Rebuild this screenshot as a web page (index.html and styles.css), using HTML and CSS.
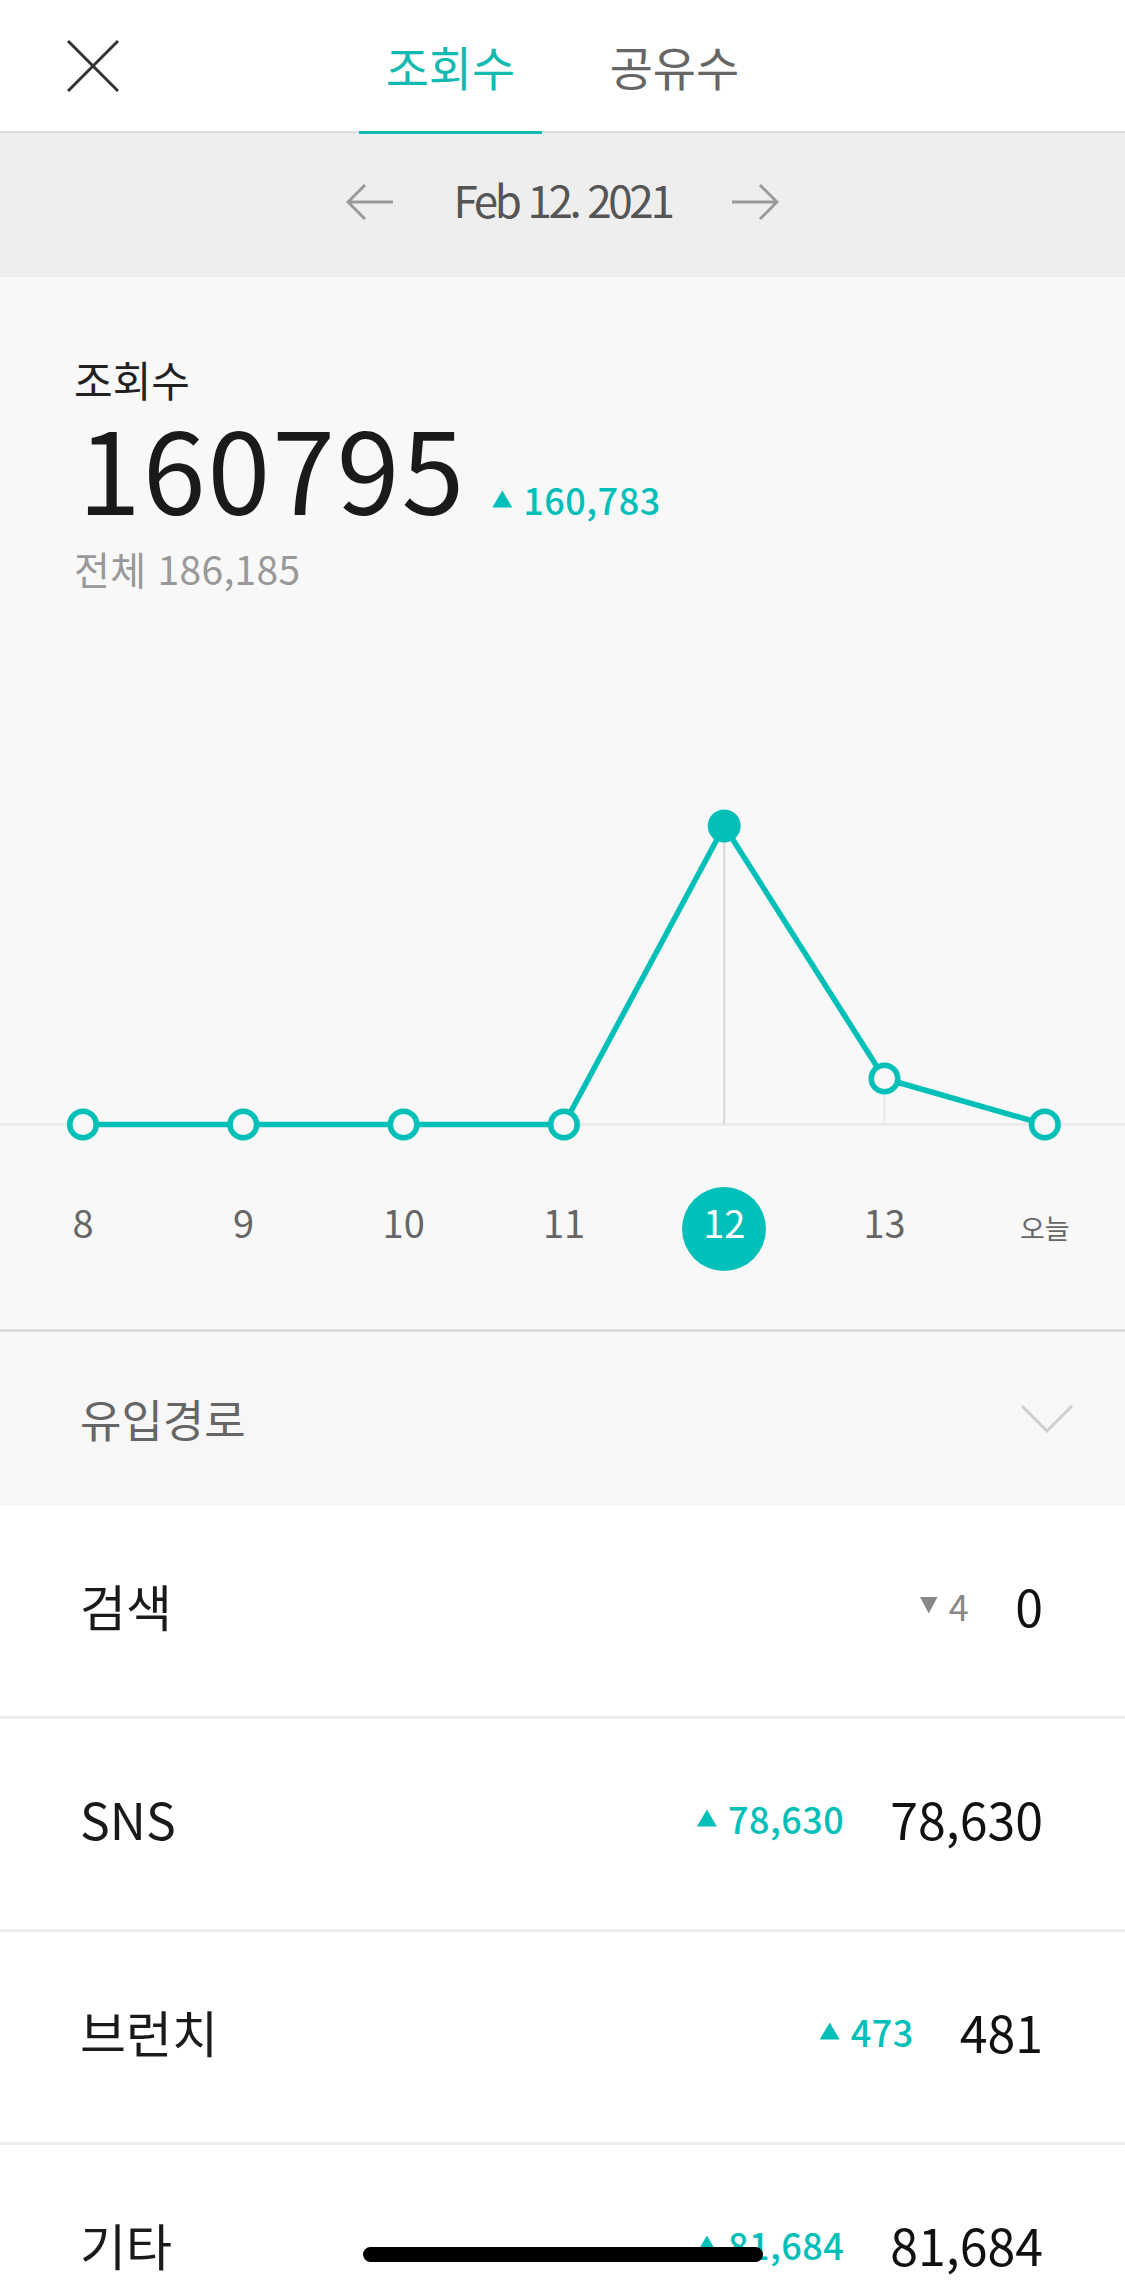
FILE: index.html
```html
<!DOCTYPE html>
<html lang="ko">
<head>
<meta charset="utf-8">
<title>통계</title>
<link rel="stylesheet" href="styles.css">
</head>
<body>
<div class="screen">
  <header class="topbar">
    <a href="javascript:;" class="close">
      <svg width="52" height="52" viewBox="0 0 52 52"><path d="M1 1L51 51M51 1L1 51" stroke="#333" stroke-width="3" fill="none"/></svg>
    </a>
    <nav class="tabs">
      <a href="javascript:;" class="tab on">조회수</a>
      <a href="javascript:;" class="tab">공유수</a>
    </nav>
    <span></span>
  </header>

  <div class="datebar">
    <a href="javascript:;" class="arrow">
      <svg width="48" height="38" viewBox="0 0 48 38"><path d="M47 19H2M19 2L2 19L19 36" stroke="#999" stroke-width="3" fill="none"/></svg>
    </a>
    <span class="date">Feb 12. 2021</span>
    <a href="javascript:;" class="arrow">
      <svg width="48" height="38" viewBox="0 0 48 38"><path d="M1 19H46M29 2L46 19L29 36" stroke="#999" stroke-width="3" fill="none"/></svg>
    </a>
  </div>

  <section class="summary">
    <div class="head">
      <div class="label">조회수</div>
      <div class="total">
        <span class="big">160795</span>
        <span class="delta up">160,783</span>
      </div>
      <div class="all">전체 186,185</div>
    </div>

    <svg class="chart" width="1125" height="560" viewBox="0 0 1125 560">
      <line x1="0" y1="524.5" x2="1125" y2="524.5" stroke="#ebebeb" stroke-width="3"/>
      <line x1="724.2" y1="226" x2="724.2" y2="524" stroke="#dcdcdc" stroke-width="2.5"/>
      <line x1="884.5" y1="478" x2="884.5" y2="524" stroke="#e8e8e8" stroke-width="2"/>
      <polyline points="83,524.5 243.3,524.5 403.6,524.5 563.9,524.5 724.2,226 884.5,478.5 1044.8,524.5" fill="none" stroke="#02bfb8" stroke-width="5.5" stroke-linejoin="round"/>
      <g fill="#f8f8f8" stroke="#02bfb8" stroke-width="5.5">
        <circle cx="83" cy="524.5" r="13.3"/>
        <circle cx="243.3" cy="524.5" r="13.3"/>
        <circle cx="403.6" cy="524.5" r="13.3"/>
        <circle cx="563.9" cy="524.5" r="13.3"/>
        <circle cx="884.5" cy="478.5" r="13.3"/>
        <circle cx="1044.8" cy="524.5" r="13.3"/>
      </g>
      <circle cx="724.2" cy="226" r="16.5" fill="#02bfb8"/>
    </svg>

    <ul class="axis">
      <li>8</li>
      <li>9</li>
      <li>10</li>
      <li>11</li>
      <li class="on"><span>12</span></li>
      <li>13</li>
      <li class="today">오늘</li>
    </ul>
  </section>

  <div class="source">
    <span>유입경로</span>
    <svg width="52" height="28" viewBox="0 0 52 28"><path d="M1 1L26 26L51 1" stroke="#cfcfcf" stroke-width="3" fill="none"/></svg>
  </div>

  <ul class="rows">
    <li><span class="name">검색</span><span class="delta down">4</span><span class="val">0</span></li>
    <li><span class="name">SNS</span><span class="delta up">78,630</span><span class="val">78,630</span></li>
    <li><span class="name">브런치</span><span class="delta up">473</span><span class="val">481</span></li>
    <li><span class="name">기타</span><span class="delta up">81,684</span><span class="val">81,684</span></li>
  </ul>

  <div class="home-bar"></div>
</div>
</body>
</html>
```

FILE: styles.css
```css
html, body, ul, li, div, a, span { margin: 0; padding: 0; }
body { background: #fff; font-family: "Noto Sans CJK KR", "Noto Sans", sans-serif; color: #1a1a1a; }
ul { list-style: none; }
a { text-decoration: none; color: inherit; }

.screen { width: 1125px; height: 2286px; overflow: hidden; position: relative; }

/* top tabs */
.topbar { height: 131px; display: grid; grid-template-columns: 1fr auto 1fr; align-items: center; background: #fff; border-bottom: 2px solid #dedede; }
.close { display: block; width: 52px; height: 52px; margin-left: 67px; margin-top: 1px; }
.close svg { display: block; }
.tabs { display: flex; gap: 41px; height: 131px; }
.tab { display: block; width: 183px; text-align: center; font-size: 47px; line-height: 131px; color: #666; position: relative; }
.tab.on { color: #12bab2; }
.tab.on:after { content: ""; position: absolute; left: 0; right: 0; bottom: -3px; height: 3px; background: #12bab2; }

/* date */
.datebar { height: 138px; padding-bottom: 6px; background: #eee; display: flex; justify-content: center; align-items: center; }
.arrow { display: block; height: 38px; }
.arrow svg { display: block; }
.date { font-size: 44px; color: #555; margin: -6px 60px 0; letter-spacing: -3.4px; line-height: 60px; }

/* summary */
.summary { background: #f8f8f8; padding-bottom: 58px; border-bottom: 3px solid #ddd; }
.head { padding: 81px 0 0 74px; }
.label { font-size: 42px; line-height: 42px; color: #222; }
.total { display: flex; align-items: flex-end; height: 100px; margin-top: 16px; }
.big { font-size: 113px; line-height: 100px; color: #1a1a1a; margin: 0 26px 0 4px; letter-spacing: 2px; }
.delta { font-size: 36px; line-height: 40px; font-weight: 500; color: #00bfb8; display: inline-flex; align-items: center; letter-spacing: 0.5px; }
.total .delta { margin-bottom: -3px; }
.delta:before { content: ""; width: 20px; height: 17px; margin-right: 11px; background: currentColor; clip-path: polygon(50% 0, 100% 100%, 0 100%); }
.delta.down { color: #888; font-weight: 400; }
.delta.down:before { width: 18px; clip-path: polygon(0 0, 100% 0, 50% 100%); }
.all { font-size: 39px; line-height: 44px; color: #999; margin-top: 30px; letter-spacing: 0.3px; }

.chart { display: block; margin-top: 10px; }

.axis { display: grid; grid-template-columns: repeat(7, 1fr); padding-left: 3px; margin-top: 27px; }
.axis li { height: 84px; line-height: 70px; text-align: center; font-size: 38px; color: #666; }
.axis li.today { font-size: 27px; padding-top: 6px; height: 78px; }
.axis li.on span { display: inline-block; width: 84px; height: 84px; border-radius: 50%; background: #00c0b9; color: #fff; }

/* source header */
.source { height: 174px; background: #f7f7f7; display: flex; justify-content: space-between; align-items: center; padding: 0 52px 0 80px; }
.source span { font-size: 45px; color: #666; line-height: 60px; }
.source svg { display: block; }

/* rows */
.rows li { height: 210px; border-bottom: 3px solid #eee; display: flex; align-items: center; padding: 0 82px 0 80px; background: #fff; }
.rows .name { font-size: 50px; color: #1a1a1a; flex: 1; line-height: 60px; margin-top: -12px; }
.rows .delta { margin-right: 46px; margin-top: -12px; }
.rows .val { font-size: 50px; color: #111; line-height: 60px; margin-top: -12px; }

.home-bar { position: absolute; left: 363px; bottom: 24px; width: 400px; height: 15px; border-radius: 8px; background: #000; }
```
